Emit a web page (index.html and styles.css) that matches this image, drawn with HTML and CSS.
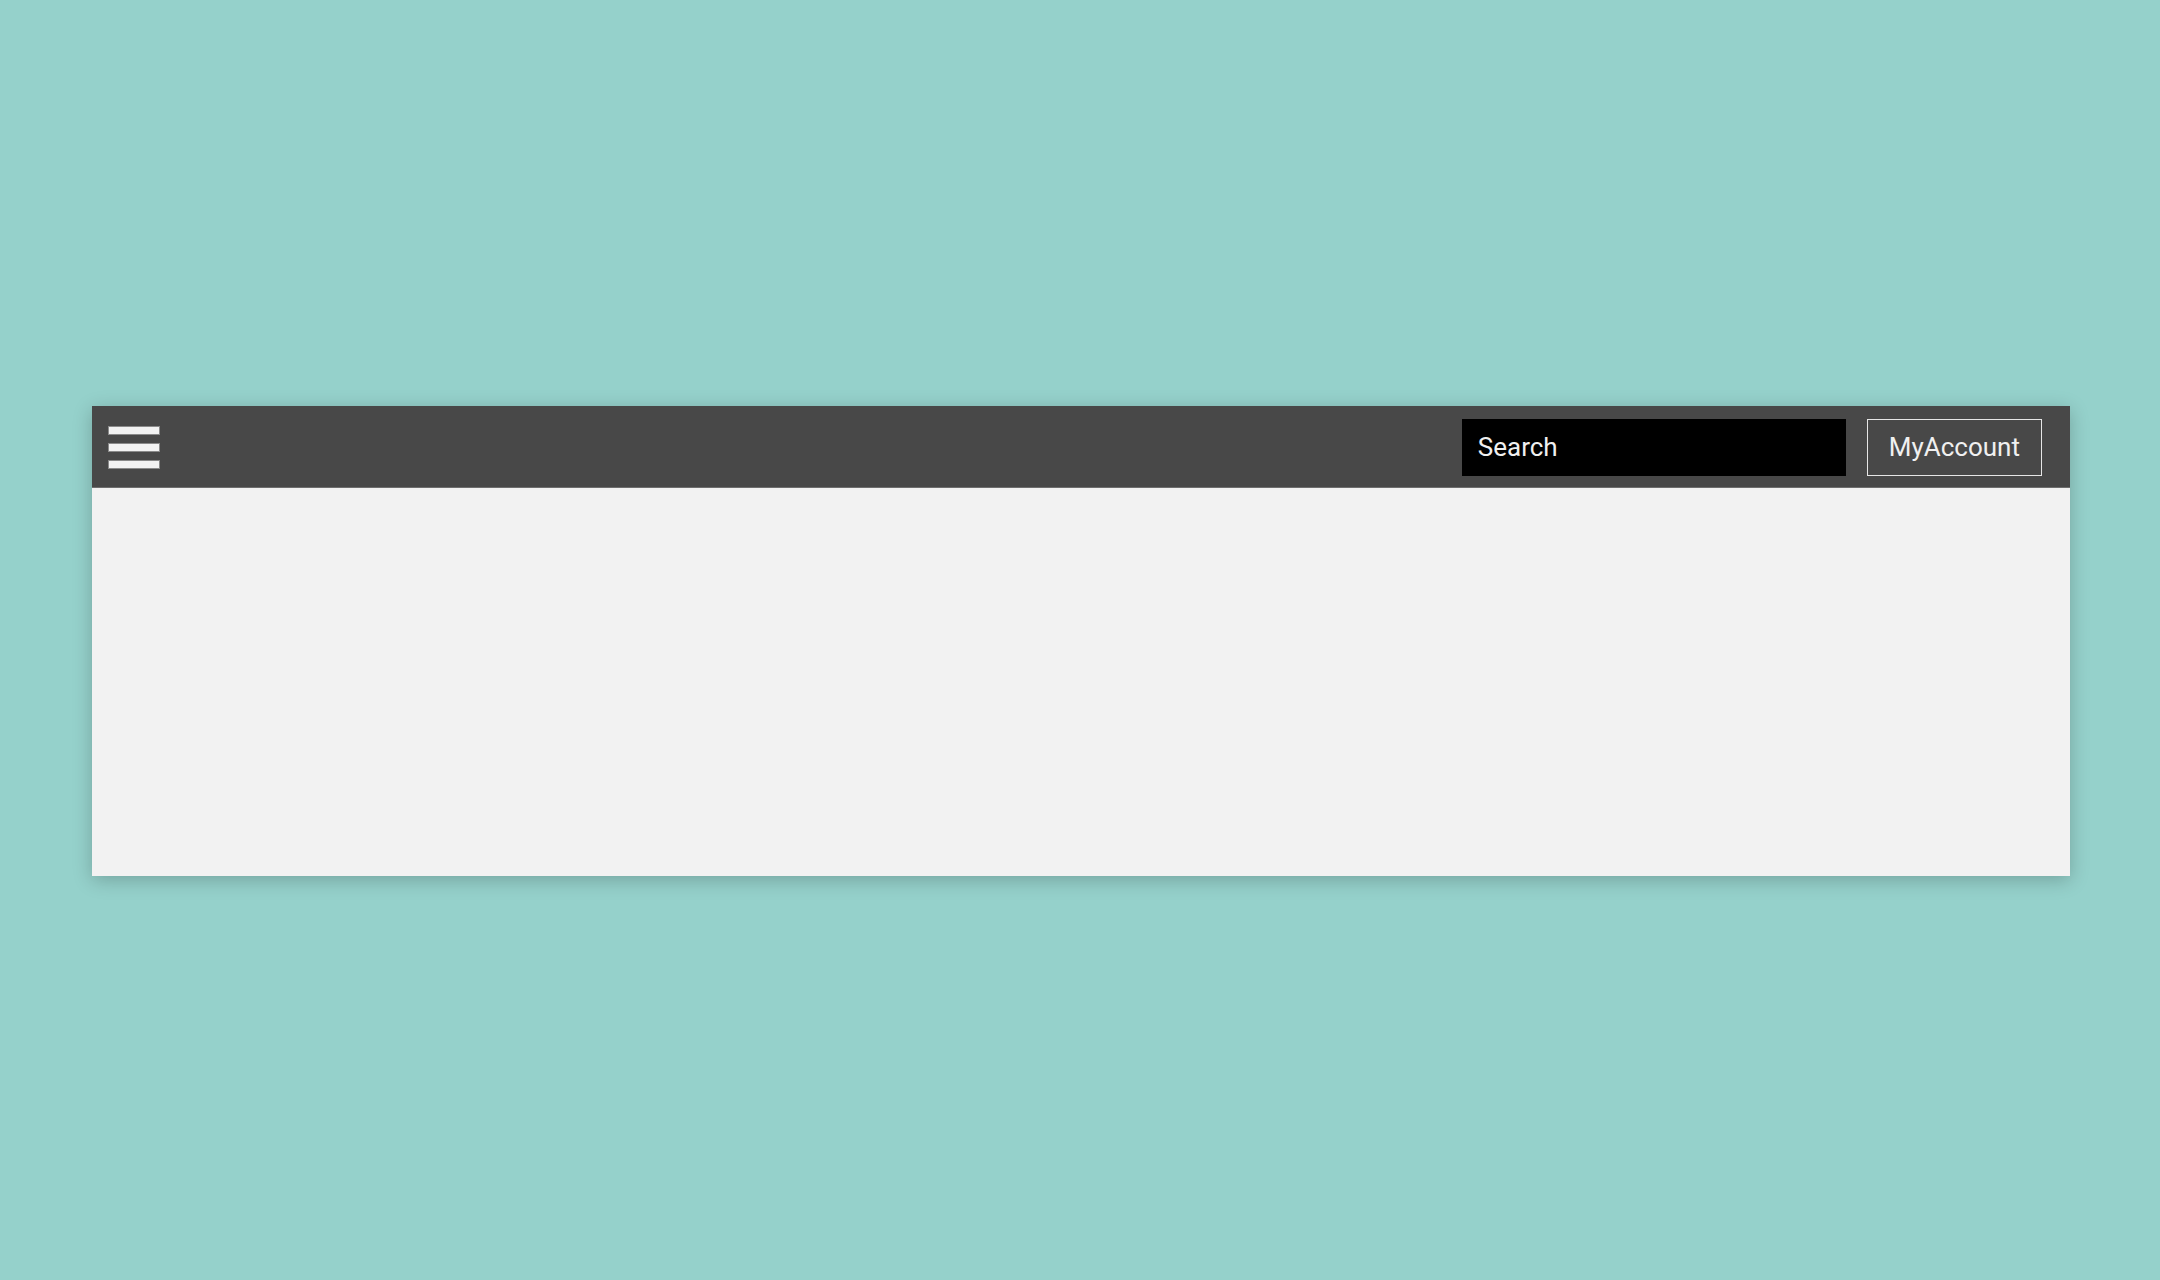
FILE: index.html
```html
<!DOCTYPE html>
<html>
<head>
<meta charset="utf-8">
<link rel="stylesheet" href="styles.css">
</head>
<body>
<div class="app">
  <header class="topbar">
    <div class="burger">
      <span class="bar"></span>
      <span class="bar"></span>
      <span class="bar"></span>
    </div>
    <div class="spacer"></div>
    <div class="search">Search</div>
    <div class="account">MyAccount</div>
  </header>
  <main class="content"></main>
</div>
</body>
</html>
```
FILE: styles.css
```css
html, body {
  margin: 0;
  padding: 0;
}
body {
  background: #95d1cb;
  font-family: Roboto, "Liberation Sans", sans-serif;
  height: 1280px;
  overflow: hidden;
}
.app {
  margin: 406px 0 0 92px;
  width: 1978px;
  box-shadow: 0 4px 18px rgba(0, 0, 0, 0.22);
}
.topbar {
  height: 81px;
  background: #484848;
  border-bottom: 1px solid #6e6e6e;
  display: flex;
  align-items: center;
  padding: 0 28px 0 16px;
}
.burger {
  display: flex;
  flex-direction: column;
  gap: 8px;
  width: 52px;
  margin-top: 1px;
}
.bar {
  display: block;
  height: 7px;
  background: #f2f2f2;
  border: 0.5px solid #8a8a8a;
}
.spacer {
  flex: 1;
}
.search {
  width: 368px;
  height: 57px;
  background: #000;
  color: #f0f0f0;
  font-size: 26px;
  display: flex;
  align-items: center;
  padding-left: 16px;
  margin-top: 1px;
}
.account {
  margin-left: 21px;
  height: 54px;
  padding: 0 21px 1px;
  border: 1px solid #e6e6e6;
  color: #f0f0f0;
  font-size: 26px;
  display: flex;
  align-items: center;
  margin-top: 2px;
}
.content {
  display: block;
  height: 388px;
  background: #f2f2f2;
}
```
